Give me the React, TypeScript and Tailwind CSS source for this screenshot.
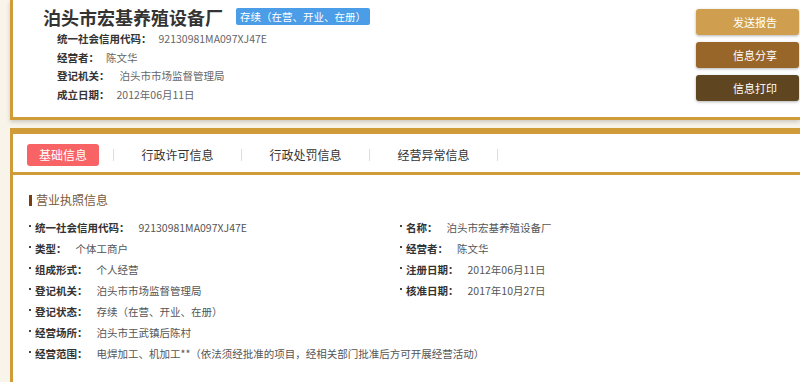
const font = { fontFamily: '"Noto Sans CJK SC", "Noto Sans", sans-serif' };

const topRows = [
  { label: "统一社会信用代码：", value: "92130981MA097XJ47E", gap: "ml-[7px]" },
  { label: "经营者：", value: "陈文华", gap: "ml-[7px]" },
  { label: "登记机关：", value: "泊头市市场监督管理局", gap: "ml-[10px]" },
  { label: "成立日期：", value: "2012年06月11日", gap: "ml-[7px]" },
];

const tabs = ["行政许可信息", "行政处罚信息", "经营异常信息"];

function Field({ label, value }: { label: string; value: string }) {
  return (
    <div className="flex h-[21px] items-center whitespace-nowrap">
      <span className="mr-[4px] mb-[3px] h-[2px] w-[2px] bg-[#444]" />
      <span className="font-bold text-[#333]">{label}</span>
      <span className="ml-[9px] text-[#555]">{value}</span>
    </div>
  );
}

export default function App() {
  return (
    <div className="min-h-screen bg-[#f8f4ea] pl-[10px] text-[10.5px]" style={font}>
      {/* 기업 개요 카드 */}
      <div className="flex h-[120px] border-b-[3px] border-l-[3px] border-[#d09c3a] bg-white shadow-[0_2px_4px_rgba(0,0,0,0.18)]">
        <div className="flex-1 pt-[5px]">
          <div className="flex h-[23px] items-center pl-[30px]">
            <h1 className="text-[18px] font-bold leading-none text-[#333]">泊头市宏基养殖设备厂</h1>
            <span className="ml-[13px] flex h-[17px] items-center rounded-[2px] bg-[#4a9de6] px-[4px] text-white">
              存续（在营、开业、在册）
            </span>
          </div>
          <div className="mt-[2px] pl-[44px]">
            {topRows.map((r) => (
              <div key={r.label} className="flex h-[18.5px] items-center">
                <span className="font-bold text-[#333]">{r.label}</span>
                <span className={`${r.gap} text-[#666]`}>{r.value}</span>
              </div>
            ))}
          </div>
        </div>
        <div className="flex w-[104px] flex-col gap-[7px] pt-[9px] pr-[1px] text-[11px] text-white">
          <button className="h-[26px] rounded-[3px] bg-[#cf9f4f] pl-[37px] text-left shadow-[0_1px_3px_rgba(0,0,0,0.3)]">
            发送报告
          </button>
          <button className="h-[26px] rounded-[3px] bg-[#99662a] pl-[37px] text-left shadow-[0_1px_3px_rgba(0,0,0,0.3)]">
            信息分享
          </button>
          <button className="h-[26px] rounded-[3px] bg-[#5f4620] pl-[37px] text-left shadow-[0_1px_3px_rgba(0,0,0,0.3)]">
            信息打印
          </button>
        </div>
      </div>

      {/* 상세 정보 카드 */}
      <div className="mt-[8px] border-l-[3px] border-t-[6px] border-[#d09c3a] bg-white pb-[30px]">
        <div className="flex h-[41px] items-start border-b-[3px] border-[#d09c3a] pt-[10px] text-[12px] text-[#333]">
          <div className="flex w-[100px] justify-center">
            <span className="flex h-[22px] w-[72px] items-center justify-center rounded-[3px] bg-[#f86466] text-white">
              基础信息
            </span>
          </div>
          <span className="mt-[5px] h-[12px] w-px bg-[#ddd]" />
          {tabs.map((t) => (
            <div key={t} className="flex">
              <span className="flex h-[22px] w-[127px] items-center justify-center">{t}</span>
              <span className="mt-[5px] h-[12px] w-px bg-[#ddd]" />
            </div>
          ))}
        </div>

        <div className="pl-[16px] pt-[18px]">
          <div className="flex h-[14px] items-center">
            <span className="h-[11px] w-[3px] bg-[#7a3c10]" />
            <span className="ml-[4px] text-[12px] text-[#7a5a3c]">营业执照信息</span>
          </div>
          <div className="mt-[10px]">
            <div className="grid grid-cols-[371px_1fr]">
              <Field label="统一社会信用代码：" value="92130981MA097XJ47E" />
              <Field label="名称：" value="泊头市宏基养殖设备厂" />
              <Field label="类型：" value="个体工商户" />
              <Field label="经营者：" value="陈文华" />
              <Field label="组成形式：" value="个人经营" />
              <Field label="注册日期：" value="2012年06月11日" />
              <Field label="登记机关：" value="泊头市市场监督管理局" />
              <Field label="核准日期：" value="2017年10月27日" />
            </div>
            <Field label="登记状态：" value="存续（在营、开业、在册）" />
            <Field label="经营场所：" value="泊头市王武镇后陈村" />
            <Field label="经营范围：" value="电焊加工、机加工**（依法须经批准的项目，经相关部门批准后方可开展经营活动）" />
          </div>
        </div>
      </div>
    </div>
  );
}
